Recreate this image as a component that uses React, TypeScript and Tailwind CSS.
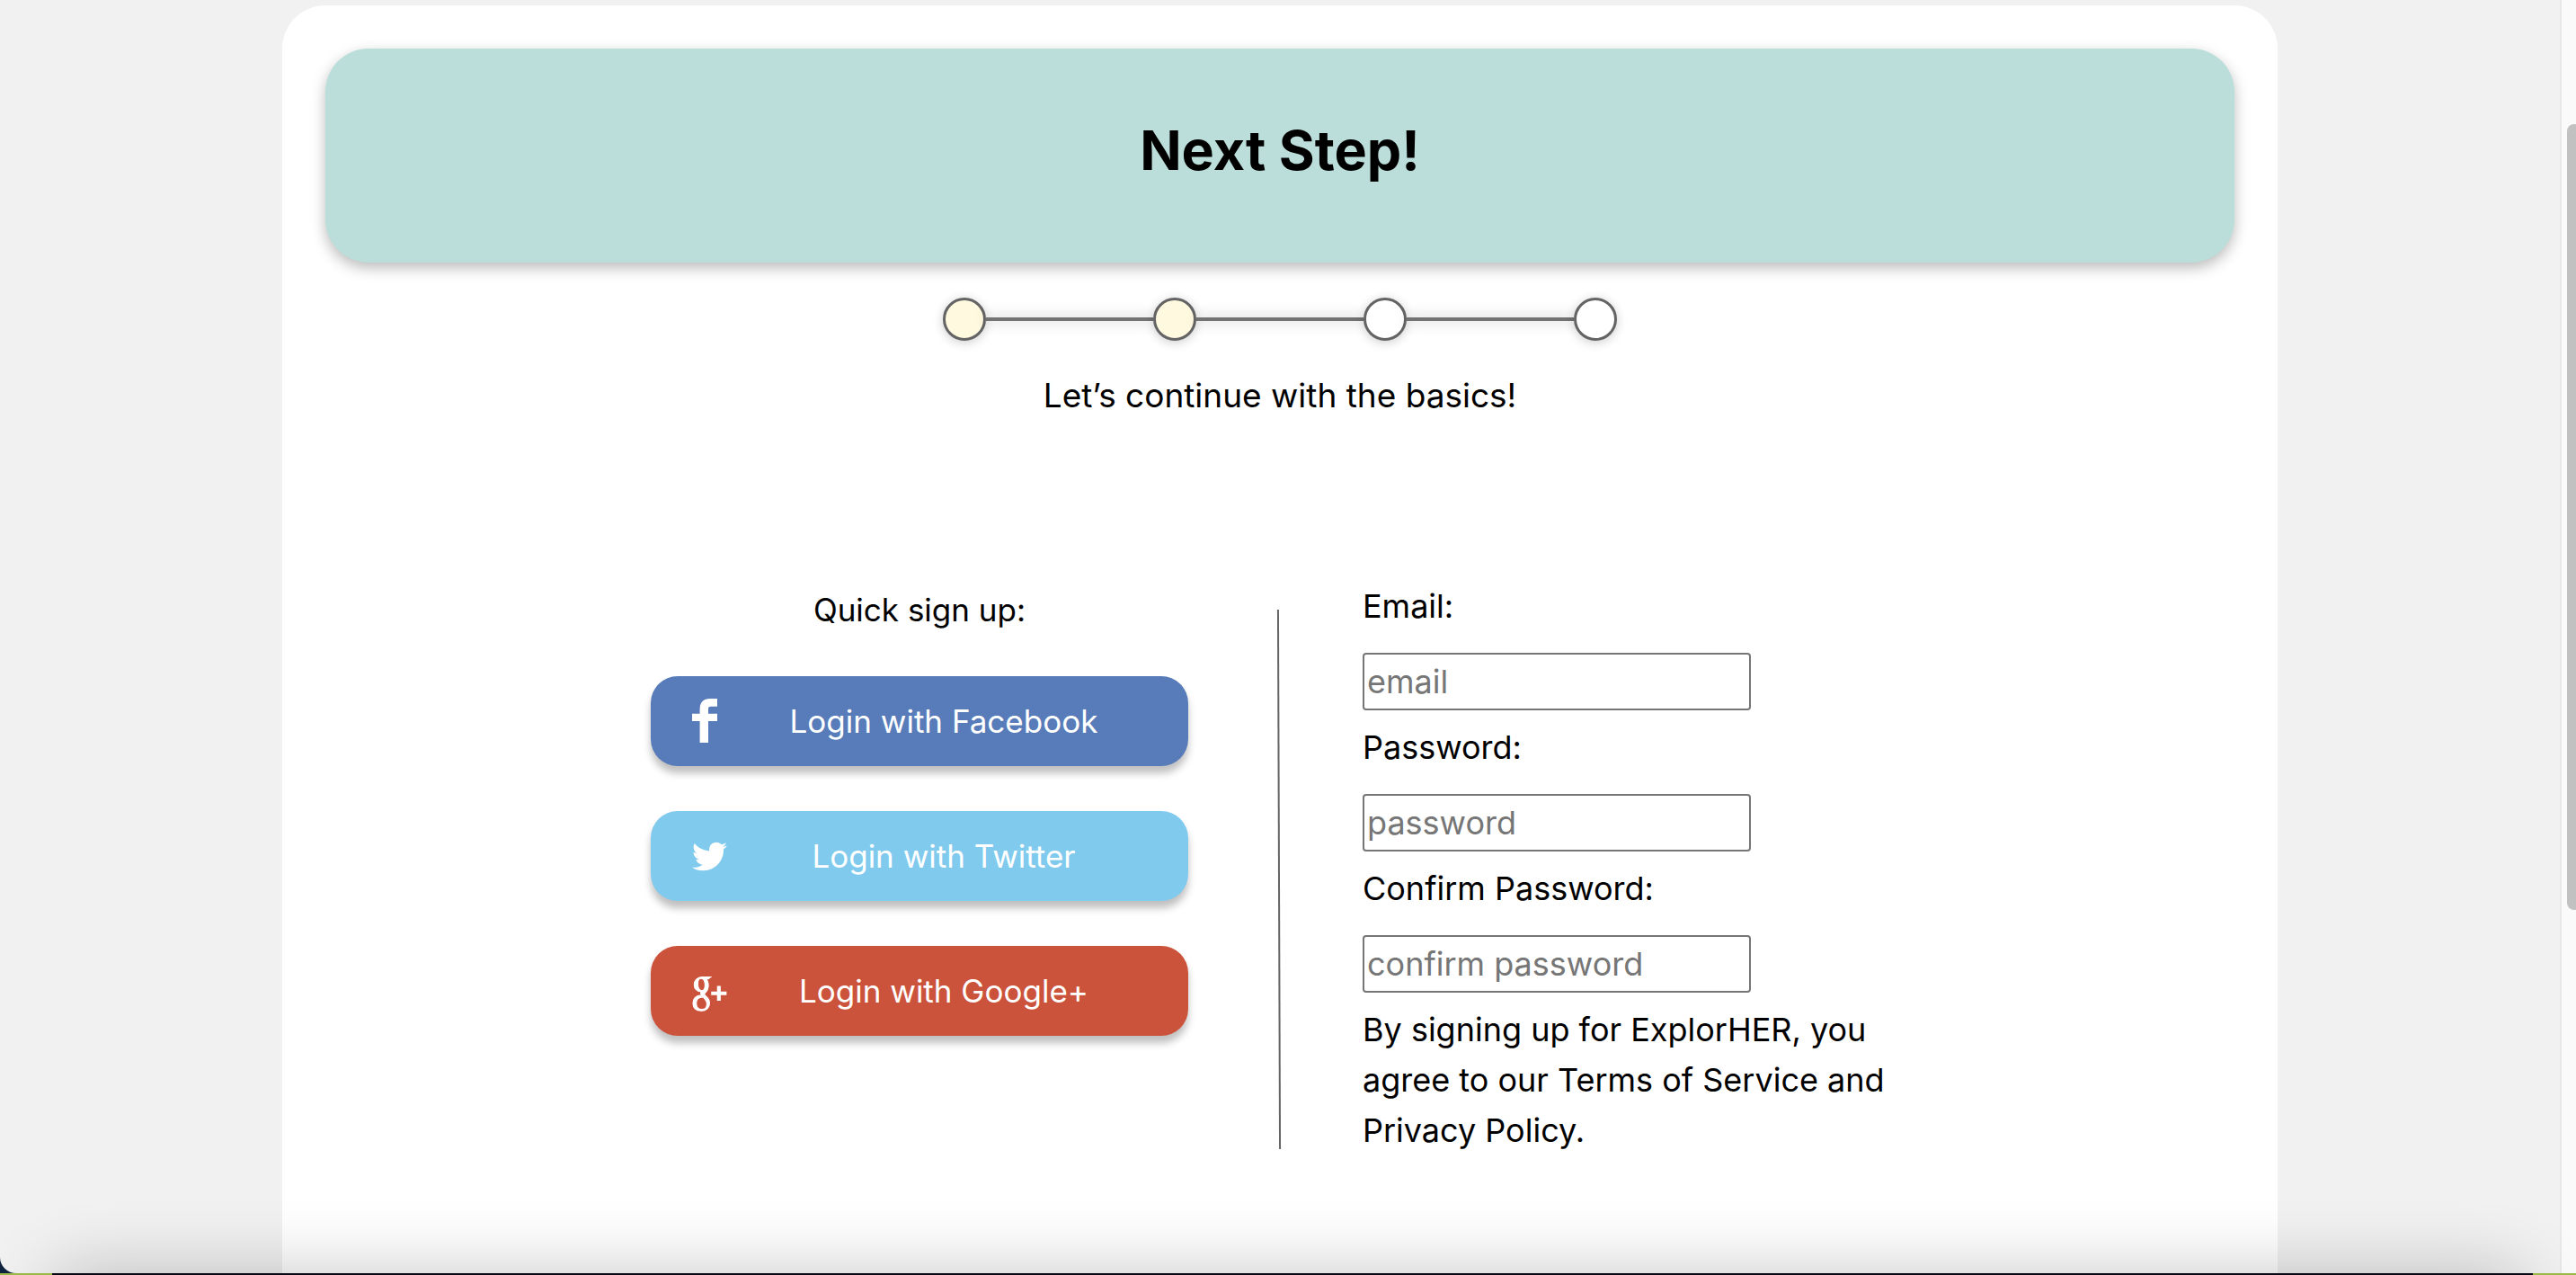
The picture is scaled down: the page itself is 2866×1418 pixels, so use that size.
import { useId } from "react";
import type { ReactNode } from "react";
import { FaTwitter } from "react-icons/fa";

function FacebookIcon() {
  return (
    <svg viewBox="0 0 28 50" width="28" height="50" fill="currentColor" aria-hidden="true">
      <path d="M8.6 49V25H0V16.7H8.6V12C8.6 4 12.5 0 20 0H28V8.7H21C18.5 8.7 18 9.8 18 12V16.7H28V25H18V49Z" />
    </svg>
  );
}

function GooglePlusIcon() {
  return (
    <svg viewBox="28 0 112 134" width="39" height="46" fill="currentColor" fillRule="evenodd" aria-hidden="true">
      <path
        stroke="currentColor"
        strokeWidth="3"
        d="M88 22H60C44 22 34 33 34 47C34 60 43 70 56 70C54 74 55 78 58 81C40 82 30 92 30 108C30 122 40 132 57 132C73 132 84 122 84 106C84 96 79 90 72 84C67 80 66 77 70 73C76 68 80 61 80 49C80 41 77 33 72 28H80ZM56 27C64 27 69 37 69 49C69 60 65 66 59 66C51 66 46 56 46 44C46 33 50 27 56 27ZM62 87C49 87 41 94 41 107C41 119 48 127 59 127C69 127 75 119 75 109C75 100 70 94 62 87Z"
      />
      <path d="M108 51h12v18h19v12h-19v18h-12v-18h-19v-12h19z" />
    </svg>
  );
}

function SocialButton({ icon, color, children }: { icon: ReactNode; color: string; children: ReactNode }) {
  return (
    <button
      type="button"
      className={`flex h-[100px] w-full items-center rounded-[30px] pr-8 pl-[46px] text-white shadow-[0_8px_8px_rgba(0,0,0,0.25)] ${color}`}
    >
      <span className="flex w-10 shrink-0 items-center">{icon}</span>
      <span className="flex-1 leading-[56px]">{children}</span>
    </button>
  );
}

function Steps({ total, done }: { total: number; done: number }) {
  return (
    <ol className="mx-auto mt-[39px] flex w-[750px] max-w-full items-center" aria-label={`Step ${done} of ${total}`}>
      {Array.from({ length: total }, (_, i) => (
        <li key={i} className={i === 0 ? "flex items-center" : "flex flex-1 items-center"}>
          {i > 0 && <span className="h-1 flex-1 bg-[#737373] shadow-[0_0_16px_rgba(0,0,0,0.3)]" />}
          <span
            className={`size-12 rounded-full border-[3px] border-[#646464] shadow-[0_2px_12px_rgba(0,0,0,0.2)] ${
              i < done ? "bg-[#fff9e0]" : "bg-white"
            }`}
          />
        </li>
      ))}
    </ol>
  );
}

function Field({ label, type, placeholder }: { label: string; type: string; placeholder: string }) {
  const id = useId();
  return (
    <div className="mb-[13px] flex flex-col items-start gap-6">
      <label htmlFor={id}>{label}</label>
      <input
        id={id}
        type={type}
        placeholder={placeholder}
        className="h-16 w-[432px] max-w-full rounded-[4px] border-2 border-[#767676] bg-white px-[3px] placeholder:text-[#767676]"
      />
    </div>
  );
}

export default function App() {
  return (
    <div className="relative h-screen overflow-hidden bg-[#10243f] font-['Inter','Noto_Sans',sans-serif] text-[36px] leading-[56px] text-black">
      <div className="flex h-[calc(100vh-2px)] overflow-hidden rounded-bl-[18px] bg-[#f1f1f1]">
        <div className="flex flex-1 justify-center overflow-hidden pt-1.5">
          <main className="h-[2000px] w-[77.95%] rounded-[48px] bg-white p-12">
            <header className="flex h-[238px] items-center justify-center rounded-[48px] bg-[#bbdeda] pb-3 shadow-[0_6px_16px_rgba(0,0,0,0.27)]">
              <h1 className="text-[61px] leading-[80px] font-bold">Next Step!</h1>
            </header>

            <Steps total={4} done={2} />

            <p className="mt-[33px] text-center text-[37px] leading-[56px]">Let’s continue with the basics!</p>

            <div className="mt-[178px] flex justify-center">
              <section className="w-[598px] text-[35px] leading-[56px]">
                <h2 className="mt-1 text-center">Quick sign up:</h2>
                <div className="mt-[46px] flex flex-col gap-[50px]">
                  <SocialButton color="bg-[#587cb9]" icon={<FacebookIcon />}>
                    Login with Facebook
                  </SocialButton>
                  <SocialButton color="bg-[#80caee]" icon={<FaTwitter size={39} />}>
                    Login with Twitter
                  </SocialButton>
                  <SocialButton color="bg-[#cc533b]" icon={<GooglePlusIcon />}>
                    Login with Google+
                  </SocialButton>
                </div>
              </section>

              <div className="mt-8 ml-[100px] h-[600px] w-0.5 rotate-[-0.2deg] bg-[#646464]" />

              <form className="ml-[92px] w-[608px]">
                <Field label="Email:" type="email" placeholder="email" />
                <Field label="Password:" type="password" placeholder="password" />
                <Field label="Confirm Password:" type="password" placeholder="confirm password" />
                <p>By signing up for ExplorHER, you agree to our Terms of Service and Privacy Policy.</p>
              </form>
            </div>
          </main>
        </div>

        <div className="w-[18px] overflow-hidden border-l-2 border-[#e8e8e8] bg-[#fafafa] pt-[138px] pl-1.5">
          <div className="h-[874px] w-4 rounded-full bg-[#c1c1c1]" />
        </div>
      </div>

      <div className="flex h-0.5 justify-between bg-[#080814]">
        <span className="w-[58px] bg-[#9ab845]" />
        <span className="w-12 bg-[#9ab845]" />
      </div>

      <div className="pointer-events-none absolute inset-x-0 top-0 bottom-0.5 overflow-hidden">
        <div className="absolute inset-x-[60px] top-full h-24 shadow-[0_0_80px_rgba(0,0,0,0.23)]" />
      </div>
    </div>
  );
}
